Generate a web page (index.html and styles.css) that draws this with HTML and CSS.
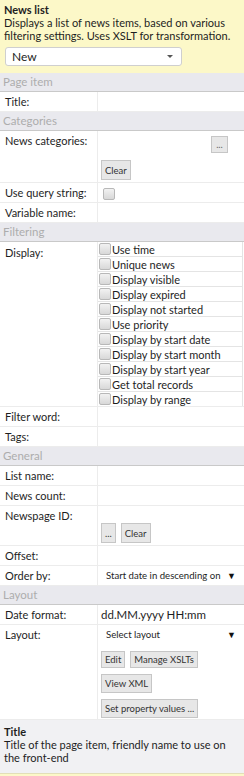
FILE: index.html
```html
<!DOCTYPE html>
<html>
<head>
<meta charset="utf-8">
<link rel="stylesheet" href="styles.css">
</head>
<body>
<div class="panel">
  <div class="intro">
    <div class="intro-title">News list</div>
    <div class="intro-desc">Displays a list of news items, based on various filtering settings. Uses XSLT for transformation.</div>
    <div class="type-select"><span>New</span><span class="caret"></span></div>
  </div>

  <div class="section">Page item</div>
  <div class="row"><div class="label">Title:</div><div class="value"></div></div>

  <div class="section">Categories</div>
  <div class="row row-cats">
    <div class="label">News categories:</div>
    <div class="value">
      <div class="cats-top"><span class="btn btn-dots">...</span></div>
      <div class="btn-line"><span class="btn">Clear</span></div>
    </div>
  </div>
  <div class="row"><div class="label">Use query string:</div><div class="value"><span class="cb cb-q"></span></div></div>
  <div class="row"><div class="label">Variable name:</div><div class="value"></div></div>

  <div class="section">Filtering</div>
  <div class="row row-display">
    <div class="label">Display:</div>
    <div class="value checklist">
      <div class="ci"><span class="cb"></span>Use time</div>
      <div class="ci"><span class="cb"></span>Unique news</div>
      <div class="ci"><span class="cb"></span>Display visible</div>
      <div class="ci"><span class="cb"></span>Display expired</div>
      <div class="ci"><span class="cb"></span>Display not started</div>
      <div class="ci"><span class="cb"></span>Use priority</div>
      <div class="ci"><span class="cb"></span>Display by start date</div>
      <div class="ci"><span class="cb"></span>Display by start month</div>
      <div class="ci"><span class="cb"></span>Display by start year</div>
      <div class="ci"><span class="cb"></span>Get total records</div>
      <div class="ci"><span class="cb"></span>Display by range</div>
    </div>
  </div>
  <div class="row"><div class="label">Filter word:</div><div class="value"></div></div>
  <div class="row"><div class="label">Tags:</div><div class="value"></div></div>

  <div class="section">General</div>
  <div class="row"><div class="label">List name:</div><div class="value"></div></div>
  <div class="row"><div class="label">News count:</div><div class="value"></div></div>
  <div class="row row-npid">
    <div class="label">Newspage ID:</div>
    <div class="value npid">
      <div class="btn-line"><span class="btn">...</span><span class="btn">Clear</span></div>
    </div>
  </div>
  <div class="row"><div class="label">Offset:</div><div class="value"></div></div>
  <div class="row"><div class="label">Order by:</div><div class="value"><div class="plain-select"><span class="ps-text">Start date in descending on</span><span class="ps-arrow">▼</span></div></div></div>

  <div class="section">Layout</div>
  <div class="row"><div class="label">Date format:</div><div class="value"><span class="fmt">dd.MM.yyyy HH:mm</span></div></div>
  <div class="row row-layout">
    <div class="label">Layout:</div>
    <div class="value">
      <div class="plain-select"><span class="ps-text">Select layout</span><span class="ps-arrow">▼</span></div>
      <div class="btn-line"><span class="btn">Edit</span><span class="btn">Manage XSLTs</span></div>
      <div class="btn-line"><span class="btn">View XML</span></div>
      <div class="btn-line"><span class="btn">Set property values ...</span></div>
    </div>
  </div>

  <div class="help">
    <div class="help-title">Title</div>
    <div class="help-desc">Title of the page item, friendly name to use on the front-end</div>
  </div>
  <div class="next"></div>
</div>
</body>
</html>
```

FILE: styles.css
```css
html, body {
  margin: 0;
  padding: 0;
  background: #ffffff;
}
body {
  font-family: "Lato", "Open Sans", sans-serif;
  font-size: 11px;
  color: #1e1e1e;
  width: 244px;
}
.panel {
  display: flex;
  flex-direction: column;
}
.intro {
  background: #fcf8c8;
  padding: 3px 4px 7px 4px;
  line-height: 13px;
  font-size: 11px;
}
.intro-title {
  font-weight: bold;
}
.intro-desc {
  margin-bottom: 5px;
}
.type-select {
  margin-left: 1px;
  width: 177px;
  background: #fff;
  border: 1px solid #cfcfcf;
  border-radius: 3px;
  display: flex;
  align-items: center;
  justify-content: space-between;
  padding: 0 8px 0 6px;
  box-sizing: border-box;
  height: 19px;
  font-size: 12px;
}
.caret {
  width: 0;
  height: 0;
  border-left: 3px solid transparent;
  border-right: 3px solid transparent;
  border-top: 3px solid #555;
}
.section {
  background: #e9e9ee;
  color: #adadad;
  height: 18px;
  line-height: 18px;
  padding-left: 3px;
  font-size: 11.5px;
  border-bottom: 1px solid #c9c9c9;
}
.row {
  display: grid;
  grid-template-columns: 98px 1fr;
  border-bottom: 1px solid #ececec;
  min-height: 19px;
}
.label {
  padding: 3px 0 0 5px;
  line-height: 13px;
  border-right: 1px solid #ececec;
}
.value {
  min-height: 19px;
  display: flex;
  flex-direction: column;
}
.row-cats .value {
  padding: 5px 0 2px 3px;
}
.cats-top {
  display: flex;
  justify-content: flex-end;
  padding-right: 16px;
  margin-bottom: 7px;
}
.btn-line {
  display: flex;
  gap: 5px;
}
.btn {
  display: inline-flex;
  align-items: center;
  justify-content: center;
  background: #e7e7e7;
  border: 1px solid #c6c6c6;
  height: 18px;
  box-sizing: border-box;
  padding: 0 3px;
  font-size: 9.5px;
  color: #333;
}
.btn-dots {
  width: 17px;
  height: 17px;
  padding: 0;
  color: #666;
}
.row-cats .btn-line .btn {
  height: 20px;
}
.cb {
  display: inline-block;
  width: 10px;
  height: 10px;
  border: 1px solid #b8b8b8;
  border-radius: 2px;
  background: linear-gradient(#f2f2f2, #d8d8d8);
  flex: none;
}
.cb-q {
  margin: 5px 0 0 5px;
}
.row-display .label {
  padding-top: 4px;
}
.checklist {
  padding-right: 1px;
}
.ci {
  display: flex;
  align-items: flex-start;
  height: 14px;
  line-height: 15px;
  border-bottom: 1px solid #e4e4e4;
  border-right: 1px solid #e4e4e4;
  padding-left: 1px;
  gap: 1px;
  white-space: nowrap;
}
.ci:last-child {
  border-bottom: none;
}
.ci .cb {
  margin-top: 1px;
}
.npid {
  justify-content: flex-end;
  padding: 0 0 2px 3px;
}
.row-npid {
  min-height: 39px;
}
.row-npid .btn {
  height: 20px;
}
.plain-select {
  display: flex;
  justify-content: space-between;
  align-items: center;
  height: 19px;
  padding: 0 8px 0 8px;
  font-size: 9.6px;
  white-space: nowrap;
}
.ps-arrow {
  font-size: 9px;
  color: #111;
}
.fmt {
  padding: 3px 0 0 3px;
  line-height: 13px;
  font-size: 11.5px;
}
.row-layout .value {
  padding-bottom: 1px;
}
.row-layout .btn-line {
  padding-left: 3px;
  margin-top: 6px;
}
.row-layout .btn-line:nth-child(2) {
  margin-top: 7px;
}
.row-layout .btn-line:nth-child(2) .btn {
  height: 17px;
}
.row-layout .btn-line:nth-child(3) .btn,
.row-layout .btn-line:nth-child(4) .btn {
  height: 19px;
}
.help {
  background: #f1f1f3;
  padding: 5px 4px 8px 4px;
  line-height: 13px;
  height: 54px;
  box-sizing: border-box;
  border-bottom: 1px solid #e2dfb8;
}
.help-title {
  font-weight: bold;
}
.next {
  background: #fcf8c8;
  height: 8px;
}
```
